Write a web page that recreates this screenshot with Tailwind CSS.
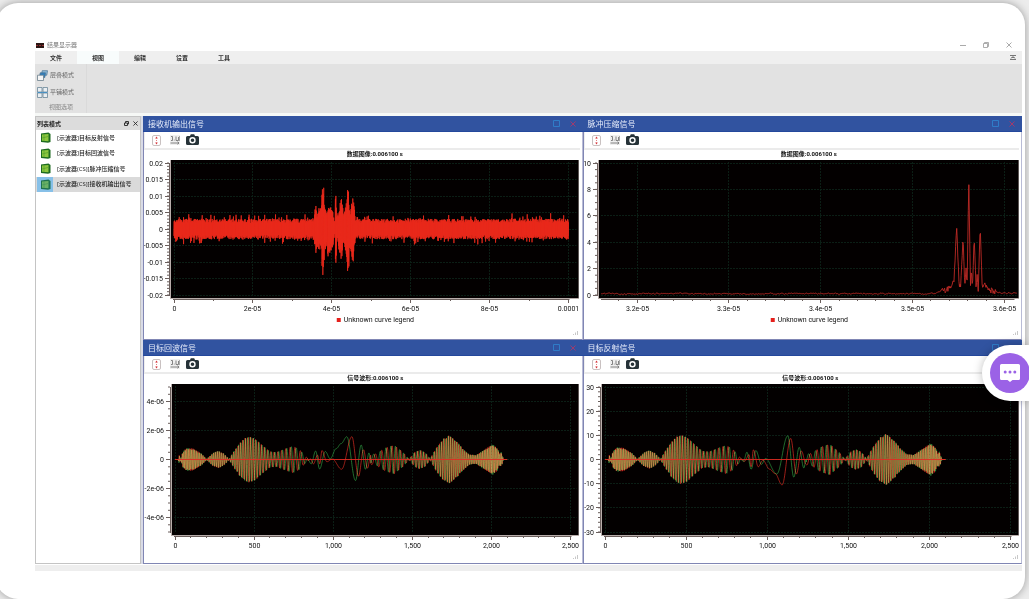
<!DOCTYPE html>
<html lang="zh">
  <head>
    <meta charset="UTF-8" />
    <meta name="viewport" content="width=device-width, initial-scale=1.0" />
    <title>结果显示器</title>
    <script src="https://cdn.jsdelivr.net/npm/@tailwindcss/browser@4"></script>
  </head>
  <body class="min-h-screen flex overflow-x-hidden bg-[#ececec] text-[6px] leading-none text-[#222] font-['Open_Sans','Noto_Sans_CJK_SC',sans-serif]">
    <!-- icons shared by every plot window -->
    <svg class="hidden">
      <symbol id="i-range" viewBox="0 0 9 11">
        <rect x=".5" y=".5" width="8" height="10" rx="1.5" fill="#fff" stroke="#c9c1c1" />
        <path d="M4.500 1.400 5.800 3.400H3.200zM4.500 9.600 5.800 7.600H3.200z" fill="#d8343c" />
        <path d="M4.500 3v5" stroke="#e08080" stroke-dasharray="1 1" />
      </symbol>
      <symbol id="i-scale" viewBox="0 0 10 10">
        <rect width="10" height="10" fill="#efefef" />
        <path d="M1 1.500h1.500v4H1M6 1.500v4h2.500V2M.5 8h8.500M7.500 6.700 9 8 7.500 9.300" fill="none" stroke="#777" stroke-width=".9" />
        <path d="M4.300 4.500v1.200M9.500 1v5" stroke="#999" stroke-width=".8" />
      </symbol>
      <symbol id="i-camera" viewBox="0 0 13 12">
        <path d="M1.500 2H4l.8-1.700h3.400L9 2h2.500A1.500 1.500 0 0 1 13 3.500v6A1.500 1.500 0 0 1 11.500 11h-10A1.500 1.500 0 0 1 0 9.500v-6A1.500 1.500 0 0 1 1.500 2z" fill="#263238" />
        <circle cx="6.500" cy="6.300" r="2.500" fill="none" stroke="#fff" stroke-width="1.400" />
      </symbol>
      <symbol id="i-scope" viewBox="0 0 11 11">
        <path d="M1 1.500 8.500.5 10.500 2v8L8 10.800 1 10z" fill="#1d6b1f" />
        <path d="M2 2.500 8.500 2v7.200L2 8.800z" fill="#8cc63e" />
        <path d="M2 6 8 4.500M4 2.400v6.400" stroke="#55a02c" stroke-width=".7" />
      </symbol>
      <symbol id="i-close" viewBox="0 0 6 6">
        <path d="M.5.5l5 5M5.500.5l-5 5" stroke="currentColor" fill="none" />
      </symbol>
    </svg>

    <main class="flex-1 min-w-0 mt-[3px] mr-1 -ml-1 pt-9 pb-7 pl-[39px] pr-[3px] rounded-[22px] bg-white shadow-[0_0_8px_rgba(0,0,0,0.35)]">
      <!-- title bar -->
      <header class="h-3 flex items-center text-[#777]">
        <svg class="w-2 h-[5px] ml-px mr-[3px]" viewBox="0 0 8 5">
          <rect width="8" height="5" fill="#2b1614" />
          <path d="M0 2.500h8" stroke="#a33" stroke-width=".8" stroke-dasharray="2 1" />
        </svg>
        <h1>结果显示器</h1>
        <div class="ml-auto mr-2.5 flex items-center gap-[17px]">
          <button aria-label="最小化"><svg class="w-[6px] h-[6px]" viewBox="0 0 6 6"><path d="M0 3.500h6" stroke="#aaa" /></svg></button>
          <button aria-label="还原"><svg class="w-[6px] h-[6px]" viewBox="0 0 6 6"><path d="M.5 1.500h4v4h-4zM1.500 1.500v-1h4v4h-1" fill="none" stroke="#999" stroke-width=".8" /></svg></button>
          <button aria-label="关闭" class="text-[#aaa]"><svg class="w-[6px] h-[6px]"><use href="#i-close" /></svg></button>
        </div>
      </header>

      <!-- menu tabs -->
      <nav class="h-[13px] flex bg-[#efefef] font-bold text-[#333]">
        <button class="w-[42px]">文件</button>
        <button class="w-[42px] bg-[#f8fcfc]">视图</button>
        <button class="w-[42px]">编辑</button>
        <button class="w-[42px]">设置</button>
        <button class="w-[42px]">工具</button>
        <button class="ml-auto mr-[6px]" aria-label="折叠">
          <svg class="w-[6px] h-[5px]" viewBox="0 0 6 5"><path d="M0 .5h6M0 4.500h6M1 3.500l2-2 2 2M1.500 2.500h3" fill="none" stroke="#777" /></svg>
        </button>
      </nav>

      <!-- ribbon -->
      <section class="h-[49px] flex bg-[#e2e2e2] text-[#666]">
        <div class="w-[52px] pt-[5px] pl-[2px] flex flex-col border-r border-[#dadada]">
          <button class="h-3 flex items-center gap-[2px]">
            <svg class="w-[11px] h-[11px]" viewBox="0 0 11 11">
              <path d="M5.200.7h5.300L9.800 5.200H4.500z" fill="#8fbbd9" stroke="#47708f" stroke-width=".7" />
              <path d="M3.200 2.800h5.300l-.7 4.700H2.500z" fill="#2f7fbc" stroke="#47708f" stroke-width=".7" />
              <path d="M.5 5.200h6v5.300h-6z" fill="#f4f4f4" stroke="#6b7f8c" stroke-width=".8" />
            </svg>
            层叠模式
          </button>
          <button class="h-3 mt-[5px] flex items-center gap-[2px]">
            <svg class="w-[11px] h-[11px]" viewBox="0 0 11 11">
              <path d="M.5.5h4.500v4.500H.5zM6 .5h4.500v4.500H6zM.5 6h4.500v4.500H.5zM6 6h4.500v4.500H6z" fill="#e9eef2" stroke="#6b8798" stroke-width=".8" />
              <path d="M.5 5.500h10" stroke="#3d8cc4" stroke-width=".9" />
            </svg>
            平铺模式
          </button>
          <p class="mt-[6px] -ml-px text-center text-[#888]">视图选项</p>
        </div>
      </section>

      <div class="flex pt-[3px] bg-[#f6f8f6]">
        <!-- signal list -->
        <aside class="w-[106px] shrink-0 border border-[#c4c4c4] bg-white">
          <div class="h-[13px] flex items-center pl-px pr-[2px] bg-[#dcdcdc]">
            <h2 class="font-bold">列表模式</h2>
            <button class="ml-auto" aria-label="浮动"><svg class="w-[5px] h-[5px]" viewBox="0 0 5 5"><path d="M.5 2h3v2.500h-3zM1.500 2V.5h3V3h-1" fill="none" stroke="#333" /></svg></button>
            <button class="ml-1" aria-label="关闭列表"><svg class="w-[5px] h-[5px]"><use href="#i-close" /></svg></button>
          </div>
          <div class="h-[62px] grid grid-rows-4 font-medium">
            <button class="flex items-center px-px gap-1 text-left whitespace-nowrap">
              <span class="w-4 h-full flex items-center justify-center"><svg class="w-[11px] h-[11px]"><use href="#i-scope" /></svg></span>[示波器]目标反射信号
            </button>
            <button class="flex items-center px-px gap-1 text-left whitespace-nowrap">
              <span class="w-4 h-full flex items-center justify-center"><svg class="w-[11px] h-[11px]"><use href="#i-scope" /></svg></span>[示波器]目标回波信号
            </button>
            <button class="flex items-center px-px gap-1 text-left whitespace-nowrap">
              <span class="w-4 h-full flex items-center justify-center"><svg class="w-[11px] h-[11px]"><use href="#i-scope" /></svg></span>[示波器(CS)]脉冲压缩信号
            </button>
            <button class="flex items-center px-px gap-1 text-left whitespace-nowrap bg-[#dadada]">
              <span class="relative w-4 h-full flex items-center justify-center bg-[#b4dcfa]"><svg class="w-[11px] h-[11px]"><use href="#i-scope" /></svg><span class="absolute inset-0 bg-[#2080c0]/30"></span></span>[示波器(CS)]接收机输出信号
            </button>
          </div>
        </aside>
        <div class="w-[2px] bg-[#d9dbe6]"></div>

        <!-- plot windows -->
        <div id="plots" class="flex-1 min-w-0 grid grid-cols-2"></div>
      </div>
      <footer class="mt-px h-[6px] bg-[#eeeeee]"></footer>
    </main>

    <!-- support chat -->
    <button class="fixed right-0 top-[345px] h-14 w-[47px] pl-2 flex items-center rounded-l-full bg-white shadow-[0_0_10px_rgba(0,0,0,0.25)] overflow-hidden" aria-label="在线客服">
      <span class="w-10 h-10 shrink-0 rounded-full bg-[#9b62e6] flex items-center justify-center">
        <svg class="w-5 h-5" viewBox="0 0 20 20">
          <path d="M1.500 1h17A1.500 1.500 0 0 1 20 2.500v13a1.500 1.500 0 0 1-1.500 1.500h-6L10 19l-2.500-2h-6A1.500 1.500 0 0 1 0 15.500v-13A1.500 1.500 0 0 1 1.500 1z" fill="#fff" />
          <g fill="#9b62e6"><circle cx="5.200" cy="9" r="1.500" /><circle cx="10" cy="9" r="1.500" /><circle cx="14.800" cy="9" r="1.500" /></g>
        </svg>
      </span>
    </button>

    <template id="window">
      <section class="min-w-0 border-x border-b border-l-[#8086b4] border-b-[#8086b4] border-r-[#b9bcd6] bg-white">
        <div class="h-4 -mx-px pl-[5px] pr-[7px] flex items-center bg-[#3153a0] border-b border-[#24489c] text-[#e6ecfa] text-[8px]">
          <h2></h2>
          <button class="ml-auto" aria-label="最大化"><svg class="w-[7px] h-[7px]" viewBox="0 0 7 7"><path d="M.5.500h6v6h-6z" fill="none" stroke="#2f7cc8" /></svg></button>
          <button class="ml-[10px] text-[#a03a6c]" aria-label="关闭窗口"><svg class="w-[6px] h-[6px]"><use href="#i-close" /></svg></button>
        </div>
        <div class="h-[18px] mr-[2px] pl-[7px] flex items-center border-b-2 border-l border-l-[#eee] border-b-[#ebebeb]">
          <button aria-label="范围"><svg class="w-[9px] h-[11px]"><use href="#i-range" /></svg></button>
          <button class="ml-[9px]" aria-label="刻度"><svg class="w-[10px] h-[10px]"><use href="#i-scale" /></svg></button>
          <button class="ml-[6px]" aria-label="截图"><svg class="w-[13px] h-3"><use href="#i-camera" /></svg></button>
        </div>
        <svg class="plot block w-full h-[189px] text-[7px] font-['Roboto','Noto_Sans_CJK_SC',sans-serif]"></svg>
      </section>
    </template>

    <script>
      // small seeded generator so the noise is the same on every draw
      let seed = 7;
      const rnd = () => ((seed = (seed * 16807) % 2147483647) / 2147483647);

      // value of a list of [x, y] points at x
      function lerp(pts, x, smooth) {
        if (x <= pts[0][0]) return pts[0][1];
        for (let i = 1; i < pts.length; i++) {
          if (x <= pts[i][0]) {
            const [x0, y0] = pts[i - 1];
            const [x1, y1] = pts[i];
            let t = (x - x0) / (x1 - x0);
            if (smooth) t = (1 - Math.cos(Math.PI * t)) / 2;
            return y0 + (y1 - y0) * t;
          }
        }
        return pts[pts.length - 1][1];
      }

      // receiver output: noise band with one burst (x in 1e-05)
      const burst = [
        [0, 1], [3.55, 1], [3.59, 2.6], [3.63, 1.5], [3.66, 2.2], [3.73, 2.4], [3.77, 4.9], [3.8, 4.2],
        [3.82, 2], [3.87, 2], [3.91, 2.9], [3.97, 2.4], [4.04, 1.5], [4.08, 0.6], [4.1, 4.9], [4.13, 1],
        [4.2, 2.4], [4.24, 3.4], [4.3, 1.4], [4.37, 2.6], [4.4, 4.8], [4.42, 4.8], [4.46, 1.9], [4.54, 3.4],
        [4.6, 1], [10, 1],
      ];
      function noise() {
        const pts = [];
        for (let x = 0; x <= 10; x += 0.011) {
          const k = lerp(burst, x);
          for (const s of [1, -1]) {
            let a = 0.0018 + rnd() * 0.0013;
            if (rnd() > 0.88 && k < 1.2) a += rnd() * 0.0018;
            pts.push([x, s * a * k]);
          }
        }
        return pts;
      }

      // pulse compression: flat floor and five peaks (x in 1e-05)
      const peaks = [
        [3.523, 0.1], [3.537, 0.4], [3.5425, 0.7], [3.5451, 1.2], [3.548, 5.1], [3.5505, 0.8], [3.5524, 0.8],
        [3.5549, 4.4], [3.5567, 0.8], [3.5582, 1.9], [3.5593, 0.9], [3.5611, 8.7], [3.5629, 0.7],
        [3.564, 2], [3.5651, 0.2], [3.5669, 4.4], [3.5691, 0.6], [3.5702, 1.6], [3.5713, 0.1],
        [3.5735, 5.4], [3.5756, 0.7], [3.578, 0.8], [3.583, 0.4], [3.596, 0.15],
      ];
      function pulse() {
        const pts = [];
        let n = 0.1;
        for (let x = 3.161; x <= 3.6135; x += 0.0006) {
          n = n * 0.6 + rnd() * 0.08;
          const near = x > 3.53 && x < 3.59 ? (rnd() - 0.5) * 0.4 : 0;
          pts.push([x, Math.max(0.05, lerp(peaks, x) - 0.1 + n + near)]);
        }
        return pts;
      }

      // chirp envelope, shared by echo and reflection
      const env = [
        [20, 0], [26, 0.3], [36, 0.05], [50, 0.55], [74, 0.78], [115, 0.75], [168, 0.4], [200, 0.03],
        [240, 0.45], [275, 0.6], [310, 0.4], [342, 0.03], [375, 0.6], [410, 1.15], [445, 1.5], [470, 1.58],
        [504, 1.45], [550, 1], [599, 0.55], [641, 0.5], [700, 0.75], [746, 0.92], [785, 0.7], [820, 0.3],
        [840, 0.05], [1200, 0.7], [1242, 0.35], [1273, 0.4], [1330, 0.8], [1385, 1], [1441, 0.5], [1479, 0.03],
        [1515, 0.5], [1546, 0.66], [1580, 0.5], [1613, 0.05], [1651, 0.8], [1693, 1.4], [1731, 1.66],
        [1777, 1.3], [1820, 0.75], [1861, 0.35], [1903, 0.3], [1966, 0.75], [2008, 1.05], [2040, 0.75],
        [2050, 0.4], [2062, 0.5], [2078, 0], [2100, 0],
      ];
      function chirp(mid, shift, gain) {
        const pts = [[10, 0]];
        for (let x = 20; x <= 2100; x += 1.7) {
          const inside = x > mid[0][0] && x < mid[mid.length - 1][0];
          const y = inside
            ? lerp(mid, x, true)
            : gain * lerp(env, x) * Math.sin(Math.PI * 1.06e-4 * (x - 1050) ** 2 + shift);
          pts.push([x, y]);
        }
        return pts;
      }
      const echoGreen = [[840, 0], [861, -0.3], [889, 0.58], [914, -0.65], [950, 0.55], [981, 0.05], [1019, 0.75], [1050, 1.1], [1086, 1.57], [1141, -1.45], [1177, 1], [1204, -0.67], [1226, 0.45], [1238, 0]];
      const echoRed = [[840, -0.1], [855, 0.05], [875, -0.3], [901, 0.3], [915, -0.3], [929, 0.62], [960, -0.15], [994, 0.03], [1053, -0.67], [1118, 1.57], [1160, -1.15], [1192, 0.67], [1216, -0.6], [1238, 0.3]];
      const reflGreen = [[838, 0], [854, -0.8], [875, 3], [901, -4], [930, 3.7], [965, -2], [989, 0.4], [1059, -6], [1127, 9.8], [1164, -7.3], [1197, 5], [1226, -3.5], [1240, 0]];
      const reflRed = [[838, 0.3], [860, -0.8], [888, 2], [901, -3], [915, 4], [945, -3], [973, -0.3], [1015, -4], [1048, -5.8], [1092, -10.5], [1145, 8.7], [1180, -6], [1211, 3.5], [1240, -2]];

      const range = (from, to, step) => {
        const out = [];
        for (let i = 0; from + i * step <= to + step / 100; i++) out.push(from + i * step);
        return out;
      };
      const comma = (v) => v.toLocaleString("en-US");

      // left: canvas margin, inset: distance from canvas edge to first and last x tick
      const windows = [
        {
          name: "接收机输出信号", title: "数据图像:0.006100 s", legend: true, left: 27, inset: [3, 10], bottom: 148,
          x: [0, 10], y: [-0.02, 0.02], xMajor: range(0, 10, 2), xMinor: range(1, 9, 2),
          yMajor: range(-0.02, 0.02, 0.005), yMinor: range(-0.02, 0.02, 0.001),
          xLabel: (v) => (v === 0 ? "0" : v === 10 ? "0.0001" : v + "e-05"), yLabel: (v) => String(+v.toFixed(3)),
          curves: [["#ea2a1c", 0.8, noise()]],
        },
        {
          name: "脉冲压缩信号", title: "数据图像:0.006100 s", legend: true, left: 15, inset: [38, 14], bottom: 148,
          x: [3.2, 3.6], y: [0, 10], xMajor: range(3.2, 3.6, 0.1), xMinor: range(3.18, 3.6, 0.02),
          yMajor: range(0, 10, 2), yMinor: range(0, 10, 0.5),
          xLabel: (v) => v.toFixed(1) + "e-05", yLabel: String,
          curves: [["#c02a26", 0.9, pulse()]],
        },
        {
          name: "目标回波信号", title: "信号波形:0.006100 s", left: 28, inset: [3, 8], bottom: 161,
          x: [0, 2500], y: [-5, 5], xMajor: range(0, 2500, 500), xMinor: range(0, 2500, 100),
          yMajor: range(-4, 4, 2), yMinor: range(-5, 5, 0.5),
          xLabel: comma, yLabel: (v) => (v ? v + "e-06" : "0"),
          curves: [["#2c9c42", 0.7, chirp(echoGreen, 0, 1)], ["#dc2c22", 0.7, chirp(echoRed, -1.57, 1)]],
        },
        {
          name: "目标反射信号", title: "信号波形:0.006100 s", left: 18, inset: [3, 8], bottom: 161,
          x: [0, 2500], y: [-30, 30], xMajor: range(0, 2500, 500), xMinor: range(0, 2500, 100),
          yMajor: range(-30, 30, 10), yMinor: range(-30, 30, 2),
          xLabel: comma, yLabel: String,
          curves: [["#2c9c42", 0.7, chirp(reflGreen, 0, 6.4)], ["#dc2c22", 0.7, chirp(reflRed, -1.57, 6.4)]],
        },
      ];

      function draw(svg, c) {
        const width = svg.getBoundingClientRect().width;
        const top = 10;
        const right = width - 3;
        const x0 = c.left + c.inset[0];
        const x1 = right - c.inset[1];
        const y0 = c.bottom - 3;
        const y1 = top + 3;
        const px = (v) => x0 + ((v - c.x[0]) / (c.x[1] - c.x[0])) * (x1 - x0);
        const py = (v) => y0 - ((v - c.y[0]) / (c.y[1] - c.y[0])) * (y0 - y1);
        const snap = (v) => Math.floor(v) + 0.5;
        const mid = (c.left + right) / 2;
        const axis = c.left - 2;
        const paired = c.curves.length > 1;
        let grid = "";
        let ticks = `M${axis + 0.5} ${y1}V${y0 + 1}M${c.left + 2} ${c.bottom + 1.5}H${x1 + (c.inset[1] > 10 ? 10 : 1)}`;
        let text = "";

        for (const v of c.xMajor) {
          const x = snap(px(v));
          grid += `M${x} ${top + 2}V${c.bottom - 2}`;
          ticks += `M${x} ${c.bottom + 1}v4`;
          text += `<text x="${x}" y="${c.bottom + 13}" text-anchor="middle">${c.xLabel(v)}</text>`;
        }
        for (const v of c.xMinor) ticks += `M${snap(px(v))} ${c.bottom + 1}v2`;
        for (const v of c.yMajor) {
          const y = snap(py(v));
          grid += `M${c.left + 2} ${y}H${right - 2}`;
          ticks += `M${axis} ${y}h-4`;
          text += `<text x="${axis - 6}" y="${y + 2}" text-anchor="end">${c.yLabel(v)}</text>`;
        }
        for (const v of c.yMinor) ticks += `M${axis} ${py(v).toFixed(1)}h-2`;

        const lines = c.curves.map(([color, w, pts]) => {
          const p = pts.map(([x, y]) => px(x).toFixed(2) + "," + py(y).toFixed(2)).join(" ");
          return `<polyline class="${paired ? "mix-blend-screen" : ""}" points="${p}" fill="none" stroke="${color}" stroke-width="${w}" />`;
        });
        if (paired) {
          lines.push(`<path d="M${px(0)} ${py(0)}H${px(2100)}" stroke="#e02a20" stroke-width=".9" />`);
        }
        const legend = c.legend
          ? `<rect x="${mid - 38}" y="168" width="4" height="4" fill="#e5201c" /><text x="${mid - 31}" y="172">Unknown curve legend</text>`
          : "";

        svg.innerHTML = `
          <rect x="${c.left - 1}" y="${top}" width="${right - c.left + 1.5}" height="${c.bottom - top + 1}" fill="#b8adaa" />
          <rect x="${c.left}" y="${top}" width="${right - c.left}" height="${c.bottom - top}" fill="#030000" />
          <path d="${grid}" stroke="#0b1e15" stroke-dasharray="2 1" fill="none" />
          ${lines.join("")}
          <path d="${ticks}" stroke="#6b5f5c" fill="none" />
          <g fill="#111">
            <text x="${mid}" y="6" text-anchor="middle" font-size="6" font-weight="700">${c.title}</text>
            ${text}${legend}
          </g>
          <path d="M${width - 4} 185v-4M${width - 6} 185v-2.500M${width - 8} 185v-1" stroke="#c8c8c8" />`;
      }

      // every plot is drawn again when its window gets another width
      const plots = document.getElementById("plots");
      const observer = new ResizeObserver((entries) => {
        for (const e of entries) draw(e.target, windows.find((c) => c.svg === e.target));
      });
      for (const c of windows) {
        const node = document.getElementById("window").content.cloneNode(true);
        node.querySelector("h2").textContent = c.name;
        c.svg = node.querySelector(".plot");
        plots.appendChild(node);
        observer.observe(c.svg);
      }
    </script>
  </body>
</html>
